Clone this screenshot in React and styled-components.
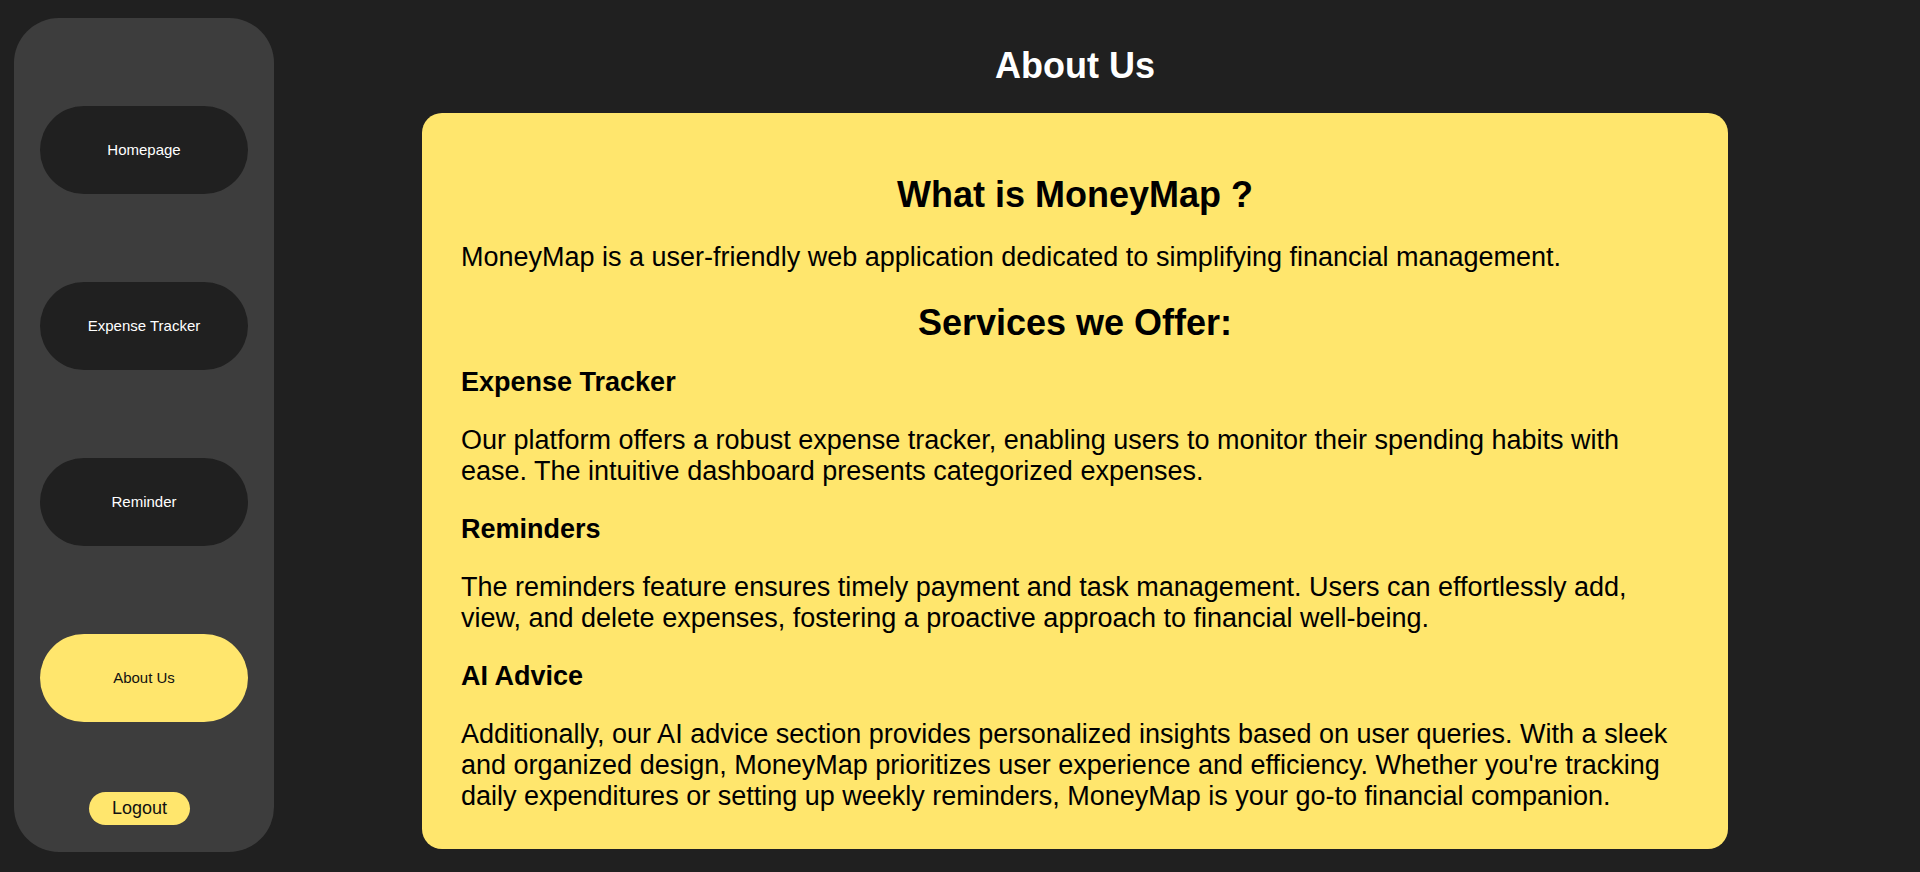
import React from "react";
import styled, { createGlobalStyle } from "styled-components";

const GlobalStyle = createGlobalStyle`
  html, body {
    margin: 0;
    padding: 0;
    background: #202020;
    font-family: "Liberation Sans", Arial, sans-serif;
  }
  * { box-sizing: border-box; }
`;

const Page = styled.div`
  display: flex;
  align-items: flex-start;
  min-height: 100vh;
  background: #202020;
`;

const Sidebar = styled.nav`
  flex: 0 0 260px;
  width: 260px;
  margin: 18px 0 20px 14px;
  padding: 88px 26px 27px;
  background: #3d3d3d;
  border-radius: 45px;
  display: flex;
  flex-direction: column;
`;

const NavList = styled.div`
  display: flex;
  flex-direction: column;
  gap: 88px;
`;

const NavButton = styled.button`
  height: 88px;
  width: 100%;
  padding: 0 0 1px;
  border: none;
  border-radius: 44px;
  background: ${(p) => (p.$active ? "#ffe66d" : "#202020")};
  color: ${(p) => (p.$active ? "#111111" : "#ffffff")};
  font-family: "Liberation Sans", Arial, sans-serif;
  font-size: 15px;
  cursor: pointer;
  display: flex;
  align-items: center;
  justify-content: center;
`;

const LogoutButton = styled.button`
  align-self: flex-start;
  margin: 70px 0 0 49px;
  height: 33px;
  width: 101px;
  padding: 0;
  border: none;
  border-radius: 17px;
  background: #ffe66d;
  color: #111111;
  font-family: "Liberation Sans", Arial, sans-serif;
  font-size: 18px;
  cursor: pointer;
`;

const Main = styled.main`
  flex: 1;
  display: flex;
  flex-direction: column;
  align-items: center;
  padding-right: 44px;
`;

const PageTitle = styled.h1`
  margin: 45px 0 0;
  font-size: 36px;
  line-height: 41px;
  font-weight: 700;
  color: #ffffff;
`;

const Card = styled.section`
  width: 1306px;
  margin-top: 27px;
  padding: 32px 39px 10px;
  background: #ffe66d;
  border-radius: 20px;
  color: #000000;
`;

const SectionTitle = styled.h2`
  margin: ${(p) => (p.$first ? "29px 0 27px" : "29px 0 24px")};
  font-size: 36px;
  line-height: 41px;
  font-weight: 700;
  text-align: center;
`;

const ServiceTitle = styled.h3`
  margin: 24px 0 27px;
  font-size: 27px;
  line-height: 31px;
  font-weight: 700;
`;

const Text = styled.p`
  margin: 27px 0;
  font-size: 27px;
  line-height: 31px;
`;

const navItems = ["Homepage", "Expense Tracker", "Reminder", "About Us"];

export default function App() {
  return (
    <>
      <GlobalStyle />
      <Page>
        <Sidebar>
          <NavList>
            {navItems.map((item) => (
              <NavButton key={item} $active={item === "About Us"}>
                {item}
              </NavButton>
            ))}
          </NavList>
          <LogoutButton>Logout</LogoutButton>
        </Sidebar>
        <Main>
          <PageTitle>About Us</PageTitle>
          <Card>
            <SectionTitle $first>What is MoneyMap ?</SectionTitle>
            <Text>
              MoneyMap is a user-friendly web application dedicated to simplifying financial management.
            </Text>
            <SectionTitle>Services we Offer:</SectionTitle>
            <ServiceTitle>Expense Tracker</ServiceTitle>
            <Text>
              Our platform offers a robust expense tracker, enabling users to monitor their spending habits with ease. The intuitive dashboard presents categorized expenses.
            </Text>
            <ServiceTitle>Reminders</ServiceTitle>
            <Text>
              The reminders feature ensures timely payment and task management. Users can effortlessly add, view, and delete expenses, fostering a proactive approach to financial well-being.
            </Text>
            <ServiceTitle>AI Advice</ServiceTitle>
            <Text>
              Additionally, our AI advice section provides personalized insights based on user queries. With a sleek and organized design, MoneyMap prioritizes user experience and efficiency. Whether you're tracking daily expenditures or setting up weekly reminders, MoneyMap is your go-to financial companion.
            </Text>
          </Card>
        </Main>
      </Page>
    </>
  );
}
